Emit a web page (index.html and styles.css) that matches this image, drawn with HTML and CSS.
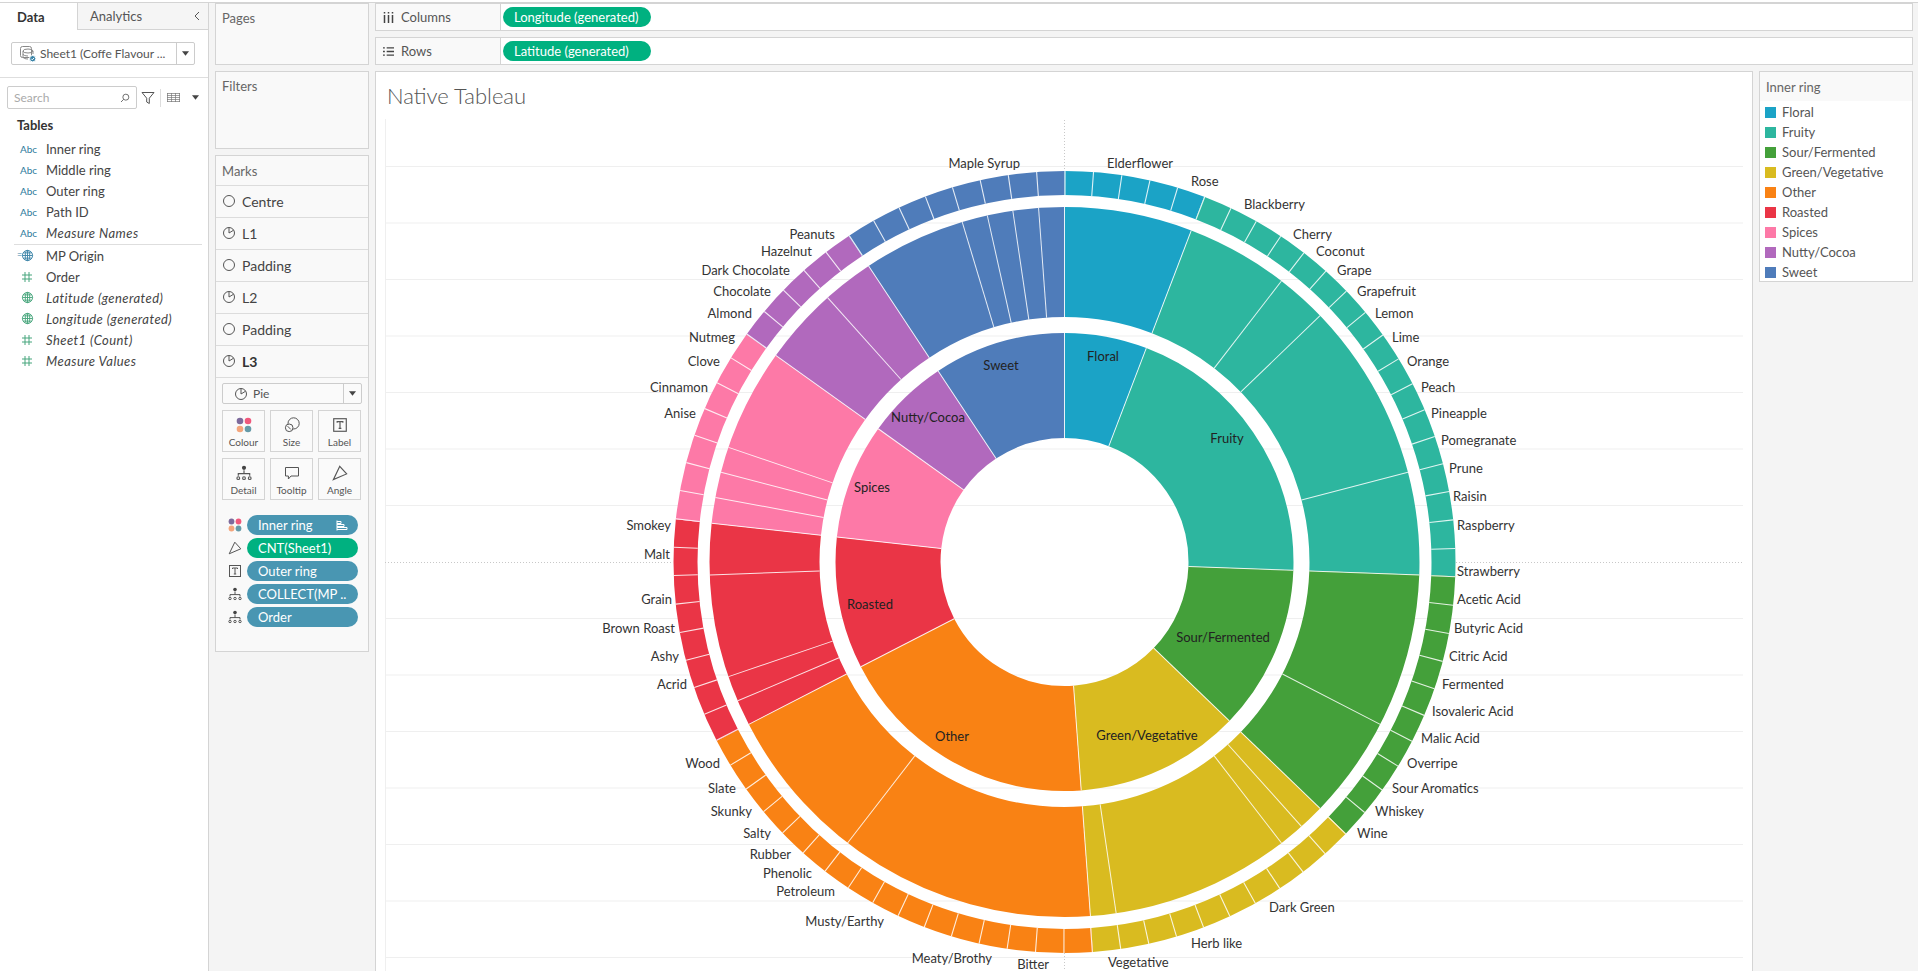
FILE: index.html
```html
<!DOCTYPE html>
<html lang="en">
<head>
<meta charset="utf-8">
<title>Native Tableau</title>
<link rel="stylesheet" href="styles.css">
</head>
<body>
<svg class="defs" width="0" height="0" aria-hidden="true">
  <defs>
    <symbol id="i-hash" viewBox="0 0 12 12"><path d="M4 1v10M8 1v10M1 4h10M1 8h10"/></symbol>
    <symbol id="i-globe" viewBox="0 0 14 14"><circle cx="7" cy="7" r="5.5"/><ellipse cx="7" cy="7" rx="2.4" ry="5.5"/><path d="M1.5 7h11M2.2 4.2h9.6M2.2 9.8h9.6M7 1.5v11"/></symbol>
    <symbol id="i-circle" viewBox="0 0 14 14"><circle cx="7" cy="7" r="5.5"/></symbol>
    <symbol id="i-pie" viewBox="0 0 14 14"><circle cx="7" cy="7" r="5.5"/><path d="M7 7V1.5M7 7l4.6-2.8"/></symbol>
    <symbol id="i-colour" viewBox="0 0 16 16"><circle class="d1" cx="4" cy="4" r="3.3"/><circle class="d2" cx="12" cy="4" r="3.3"/><circle class="d3" cx="4" cy="12" r="3.3"/><circle class="d4" cx="12" cy="12" r="3.3"/></symbol>
    <symbol id="i-size" viewBox="0 0 16 16"><circle cx="9.6" cy="6.4" r="5.6"/><circle class="fillw" cx="5.2" cy="10.8" r="3.8"/><path d="M3.6 9.2l3.2 3.2"/></symbol>
    <symbol id="i-label" viewBox="0 0 14 14"><rect x="1.5" y="1.5" width="11" height="11"/><path d="M4.5 5V4h5v1M7 4v6M5.800 10h2.400"/></symbol>
    <symbol id="i-detail" viewBox="0 0 14 14"><circle class="solid" cx="7" cy="2.5" r="1.8"/><path d="M7 4.500V8M2 9.500V7.600h10v1.900"/><circle cx="2" cy="11.5" r="1.2"/><circle cx="7" cy="11.5" r="1.2"/><circle cx="12" cy="11.5" r="1.2"/></symbol>
    <symbol id="i-tooltip" viewBox="0 0 16 14"><path d="M1.5 1.5h13v8.500H7l-2.600 3v-3H1.500z"/></symbol>
    <symbol id="i-angle" viewBox="0 0 14 14"><path d="M6.800 1.200l6 6.600L1.200 12.800z"/></symbol>
    <symbol id="i-caret" viewBox="0 0 8 5"><path class="solid" d="M0 0h8L4 5z"/></symbol>
  </defs>
</svg>

<div class="top-strip"></div>
<div class="app">
  <aside class="side">
    <div class="tabs">
      <div class="tab tab-on">Data</div>
      <div class="tab tab-off">Analytics<svg class="chev" viewBox="0 0 6 10"><path d="M5 1L1 5l4 4"/></svg></div>
    </div>
    <div class="source">
      <svg class="src-icon" viewBox="0 0 16 16">
        <rect class="g" x="0.5" y="0.5" width="11" height="11" rx="2"/>
        <ellipse class="g" cx="8" cy="5" rx="5" ry="2"/>
        <path class="g" d="M3 5v6c0 1.200 2.200 2 5 2M13 5v3M3 8c0 1 2 2 5 2"/>
        <circle class="badge" cx="12.7" cy="12.7" r="3.2"/>
        <path class="tick" d="M11.200 12.700l1.100 1.100 1.900-2"/>
      </svg>
      <span class="src-text">Sheet1 (Coffe Flavour ...</span>
      <span class="src-drop"><svg class="caret"><use href="#i-caret"/></svg></span>
    </div>
    <div class="search-row">
      <div class="search"><span class="ph">Search</span>
        <svg class="mag" viewBox="0 0 12 12"><circle cx="7" cy="5" r="3.6"/><path d="M4.400 7.600L1.200 10.800"/></svg>
      </div>
      <svg class="funnel" viewBox="0 0 14 14"><path d="M1 1.500h12L8.300 7.200v5.300L5.700 11V7.200z"/></svg>
      <span class="vsep"></span>
      <svg class="gridic" viewBox="0 0 13 10"><path d="M0 .5h13M0 2.500h13M0 4.500h13M0 6.500h13M0 8.500h13M.5 0v9M4.500 0v9M8.500 0v9M12.500 0v9"/></svg>
      <svg class="caret caret-far"><use href="#i-caret"/></svg>
    </div>
    <div class="tables">Tables</div>
    <ul class="fields">
      <li class="field"><span class="abc">Abc</span>Inner ring</li>
      <li class="field"><span class="abc">Abc</span>Middle ring</li>
      <li class="field"><span class="abc">Abc</span>Outer ring</li>
      <li class="field"><span class="abc">Abc</span>Path ID</li>
      <li class="field calc"><span class="abc">Abc</span>Measure Names</li>
    </ul>
    <div class="field-sep"></div>
    <ul class="fields fields-2">
      <li class="field"><span class="fi blue eq"><svg><use href="#i-globe"/></svg></span>MP Origin</li>
      <li class="field"><span class="fi green"><svg class="h"><use href="#i-hash"/></svg></span>Order</li>
      <li class="field calc"><span class="fi green"><svg><use href="#i-globe"/></svg></span>Latitude (generated)</li>
      <li class="field calc"><span class="fi green"><svg><use href="#i-globe"/></svg></span>Longitude (generated)</li>
      <li class="field calc"><span class="fi green"><svg class="h"><use href="#i-hash"/></svg></span>Sheet1 (Count)</li>
      <li class="field calc"><span class="fi green"><svg class="h"><use href="#i-hash"/></svg></span>Measure Values</li>
    </ul>
  </aside>

  <section class="cards">
    <div class="card card-pages"><div class="card-title">Pages</div></div>
    <div class="card card-filters"><div class="card-title">Filters</div></div>
    <div class="card card-marks">
      <div class="marks-title">Marks</div>
      <div class="mark-row"><svg class="mi"><use href="#i-circle"/></svg>Centre</div>
      <div class="mark-row"><svg class="mi"><use href="#i-pie"/></svg>L1</div>
      <div class="mark-row"><svg class="mi"><use href="#i-circle"/></svg>Padding</div>
      <div class="mark-row"><svg class="mi"><use href="#i-pie"/></svg>L2</div>
      <div class="mark-row"><svg class="mi"><use href="#i-circle"/></svg>Padding</div>
      <div class="mark-row mark-active"><svg class="mi"><use href="#i-pie"/></svg>L3</div>
      <div class="marks-body">
        <div class="type-select"><svg class="mi type-ic"><use href="#i-pie"/></svg><span class="type-name">Pie</span><span class="type-drop"><svg class="caret"><use href="#i-caret"/></svg></span></div>
        <div class="btns">
          <div class="btn"><svg class="bi"><use href="#i-colour"/></svg>Colour</div>
          <div class="btn"><svg class="bi"><use href="#i-size"/></svg>Size</div>
          <div class="btn"><svg class="bi"><use href="#i-label"/></svg>Label</div>
          <div class="btn"><svg class="bi"><use href="#i-detail"/></svg>Detail</div>
          <div class="btn"><svg class="bi"><use href="#i-tooltip"/></svg>Tooltip</div>
          <div class="btn"><svg class="bi"><use href="#i-angle"/></svg>Angle</div>
        </div>
        <div class="encs">
          <div class="enc"><svg class="ei"><use href="#i-colour"/></svg><span class="pill pill-blue pill-wide">Inner ring<svg class="sort" viewBox="0 0 12 11"><path d="M1 .5v10M1 1.500h4v2H1M1 4.500h7v2H1M1 7.500h10v2H1"/></svg></span></div>
          <div class="enc"><svg class="ei"><use href="#i-angle"/></svg><span class="pill pill-green pill-wide">CNT(Sheet1)</span></div>
          <div class="enc"><svg class="ei"><use href="#i-label"/></svg><span class="pill pill-blue pill-wide">Outer ring</span></div>
          <div class="enc"><svg class="ei"><use href="#i-detail"/></svg><span class="pill pill-blue pill-wide">COLLECT(MP ..</span></div>
          <div class="enc"><svg class="ei"><use href="#i-detail"/></svg><span class="pill pill-blue pill-wide">Order</span></div>
        </div>
      </div>
    </div>
  </section>

  <main class="main">
    <div class="shelf">
      <div class="shelf-label"><svg class="shelf-ic" viewBox="0 0 11 11"><path d="M1.500 3v8M5.500 3v8M9.500 3v8M1.500 0v1.500M5.500 0v1.500M9.500 0v1.500"/></svg>Columns</div>
      <div class="shelf-body"><span class="pill pill-green pill-shelf">Longitude (generated)</span></div>
    </div>
    <div class="shelf">
      <div class="shelf-label"><svg class="shelf-ic" viewBox="0 0 12 10"><path d="M0 1h2M4 1h8M0 5h2M4 5h8M0 9h2M4 9h8"/></svg>Rows</div>
      <div class="shelf-body"><span class="pill pill-green pill-shelf">Latitude (generated)</span></div>
    </div>
    <div class="work">
      <div class="view">
        <h1 class="view-title">Native Tableau</h1>
        <svg class="chart" viewBox="385 119 1358 852" role="img" aria-label="Sunburst of coffee flavours">
          <g class="grid">
            <path d="M385.500 119V971"/>
            <path d="M385 166.500H1743M385 223H1743M385 279.500H1743M385 336H1743M385 392.500H1743M385 449H1743M385 505.500H1743M385 618.500H1743M385 675H1743M385 731.500H1743M385 788H1743M385 844.500H1743M385 901H1743M385 957.500H1743"/>
          </g>
          <g class="zero">
            <path d="M385 562.500H673M1456 562.500H1743M1064.500 120V171M1064.500 953V971"/>
          </g>
          <g transform="translate(1064.500 562) rotate(-90)">
            <g class="ring ring-in">
              <circle class="c-floral" pathLength="86" stroke-dasharray="5 81"/>
              <circle class="c-fruity" pathLength="86" stroke-dasharray="17 69" stroke-dashoffset="-5"/>
              <circle class="c-sour" pathLength="86" stroke-dasharray="10 76" stroke-dashoffset="-22"/>
              <circle class="c-green" pathLength="86" stroke-dasharray="10 76" stroke-dashoffset="-32"/>
              <circle class="c-other" pathLength="86" stroke-dasharray="16 70" stroke-dashoffset="-42"/>
              <circle class="c-roast" pathLength="86" stroke-dasharray="8 78" stroke-dashoffset="-58"/>
              <circle class="c-spice" pathLength="86" stroke-dasharray="7 79" stroke-dashoffset="-66"/>
              <circle class="c-nutty" pathLength="86" stroke-dasharray="5 81" stroke-dashoffset="-73"/>
              <circle class="c-sweet" pathLength="86" stroke-dasharray="8 78" stroke-dashoffset="-78"/>
            </g>
            <g class="ring ring-mid">
              <circle class="c-floral" pathLength="86" stroke-dasharray="5 81"/>
              <circle class="c-fruity" pathLength="86" stroke-dasharray="17 69" stroke-dashoffset="-5"/>
              <circle class="c-sour" pathLength="86" stroke-dasharray="10 76" stroke-dashoffset="-22"/>
              <circle class="c-green" pathLength="86" stroke-dasharray="10 76" stroke-dashoffset="-32"/>
              <circle class="c-other" pathLength="86" stroke-dasharray="16 70" stroke-dashoffset="-42"/>
              <circle class="c-roast" pathLength="86" stroke-dasharray="8 78" stroke-dashoffset="-58"/>
              <circle class="c-spice" pathLength="86" stroke-dasharray="7 79" stroke-dashoffset="-66"/>
              <circle class="c-nutty" pathLength="86" stroke-dasharray="5 81" stroke-dashoffset="-73"/>
              <circle class="c-sweet" pathLength="86" stroke-dasharray="8 78" stroke-dashoffset="-78"/>
            </g>
            <g class="ring ring-out">
              <circle class="c-floral" pathLength="86" stroke-dasharray="5 81"/>
              <circle class="c-fruity" pathLength="86" stroke-dasharray="17 69" stroke-dashoffset="-5"/>
              <circle class="c-sour" pathLength="86" stroke-dasharray="10 76" stroke-dashoffset="-22"/>
              <circle class="c-green" pathLength="86" stroke-dasharray="10 76" stroke-dashoffset="-32"/>
              <circle class="c-other" pathLength="86" stroke-dasharray="16 70" stroke-dashoffset="-42"/>
              <circle class="c-roast" pathLength="86" stroke-dasharray="8 78" stroke-dashoffset="-58"/>
              <circle class="c-spice" pathLength="86" stroke-dasharray="7 79" stroke-dashoffset="-66"/>
              <circle class="c-nutty" pathLength="86" stroke-dasharray="5 81" stroke-dashoffset="-73"/>
              <circle class="c-sweet" pathLength="86" stroke-dasharray="8 78" stroke-dashoffset="-78"/>
              <circle class="ticks" pathLength="86" stroke-dasharray="0.04 0.96"/>
            </g>
          </g>
          <g class="seps" transform="translate(1064.500 562)">
            <g class="sep-in">
              <path d="M0-229V-124"/>
              <path transform="rotate(20.93)" d="M0-229V-124"/>
              <path transform="rotate(92.09)" d="M0-229V-124"/>
              <path transform="rotate(133.95)" d="M0-229V-124"/>
              <path transform="rotate(175.81)" d="M0-229V-124"/>
              <path transform="rotate(242.79)" d="M0-229V-124"/>
              <path transform="rotate(276.28)" d="M0-229V-124"/>
              <path transform="rotate(305.58)" d="M0-229V-124"/>
              <path transform="rotate(326.51)" d="M0-229V-124"/>
            </g>
            <g class="sep-mid">
              <path d="M0-355V-245"/>
              <path transform="rotate(20.93)" d="M0-355V-245"/>
              <path transform="rotate(37.67)" d="M0-355V-245"/>
              <path transform="rotate(46.05)" d="M0-355V-245"/>
              <path transform="rotate(75.35)" d="M0-355V-245"/>
              <path transform="rotate(92.09)" d="M0-355V-245"/>
              <path transform="rotate(117.21)" d="M0-355V-245"/>
              <path transform="rotate(133.95)" d="M0-355V-245"/>
              <path transform="rotate(138.14)" d="M0-355V-245"/>
              <path transform="rotate(142.33)" d="M0-355V-245"/>
              <path transform="rotate(171.63)" d="M0-355V-245"/>
              <path transform="rotate(175.81)" d="M0-355V-245"/>
              <path transform="rotate(217.67)" d="M0-355V-245"/>
              <path transform="rotate(242.79)" d="M0-355V-245"/>
              <path transform="rotate(246.98)" d="M0-355V-245"/>
              <path transform="rotate(251.16)" d="M0-355V-245"/>
              <path transform="rotate(267.91)" d="M0-355V-245"/>
              <path transform="rotate(276.28)" d="M0-355V-245"/>
              <path transform="rotate(280.47)" d="M0-355V-245"/>
              <path transform="rotate(284.65)" d="M0-355V-245"/>
              <path transform="rotate(288.84)" d="M0-355V-245"/>
              <path transform="rotate(305.58)" d="M0-355V-245"/>
              <path transform="rotate(318.14)" d="M0-355V-245"/>
              <path transform="rotate(326.51)" d="M0-355V-245"/>
              <path transform="rotate(343.26)" d="M0-355V-245"/>
              <path transform="rotate(347.44)" d="M0-355V-245"/>
              <path transform="rotate(351.63)" d="M0-355V-245"/>
              <path transform="rotate(355.81)" d="M0-355V-245"/>
            </g>
          </g>
          <g class="lab-in">
            <text x="1103" y="356">Floral</text>
            <text x="1227" y="438">Fruity</text>
            <text x="1223" y="637">Sour/Fermented</text>
            <text x="1147" y="735">Green/Vegetative</text>
            <text x="952" y="736">Other</text>
            <text x="870" y="604">Roasted</text>
            <text x="872" y="487">Spices</text>
            <text x="928" y="417">Nutty/Cocoa</text>
            <text x="1001" y="365">Sweet</text>
          </g>
          <g class="lab-r">
            <text x="1107" y="163">Elderflower</text>
            <text x="1191" y="181">Rose</text>
            <text x="1244" y="204">Blackberry</text>
            <text x="1293" y="234">Cherry</text>
            <text x="1316" y="251">Coconut</text>
            <text x="1337" y="270">Grape</text>
            <text x="1357" y="291">Grapefruit</text>
            <text x="1375" y="313">Lemon</text>
            <text x="1392" y="337">Lime</text>
            <text x="1407" y="361">Orange</text>
            <text x="1421" y="387">Peach</text>
            <text x="1431" y="413">Pineapple</text>
            <text x="1441" y="440">Pomegranate</text>
            <text x="1449" y="468">Prune</text>
            <text x="1453" y="496">Raisin</text>
            <text x="1457" y="525">Raspberry</text>
            <text x="1457" y="571">Strawberry</text>
            <text x="1457" y="599">Acetic Acid</text>
            <text x="1454" y="628">Butyric Acid</text>
            <text x="1449" y="656">Citric Acid</text>
            <text x="1442" y="684">Fermented</text>
            <text x="1432" y="711">Isovaleric Acid</text>
            <text x="1421" y="738">Malic Acid</text>
            <text x="1407" y="763">Overripe</text>
            <text x="1392" y="788">Sour Aromatics</text>
            <text x="1375" y="811">Whiskey</text>
            <text x="1357" y="833">Wine</text>
            <text x="1269" y="907">Dark Green</text>
            <text x="1191" y="943">Herb like</text>
            <text x="1108" y="962">Vegetative</text>
          </g>
          <g class="lab-l">
            <text x="1020" y="163">Maple Syrup</text>
            <text x="835" y="234">Peanuts</text>
            <text x="812" y="251">Hazelnut</text>
            <text x="790" y="270">Dark Chocolate</text>
            <text x="771" y="291">Chocolate</text>
            <text x="752" y="313">Almond</text>
            <text x="735" y="337">Nutmeg</text>
            <text x="720" y="361">Clove</text>
            <text x="708" y="387">Cinnamon</text>
            <text x="696" y="413">Anise</text>
            <text x="671" y="525">Smokey</text>
            <text x="670" y="554">Malt</text>
            <text x="672" y="599">Grain</text>
            <text x="675" y="628">Brown Roast</text>
            <text x="679" y="656">Ashy</text>
            <text x="687" y="684">Acrid</text>
            <text x="720" y="763">Wood</text>
            <text x="736" y="788">Slate</text>
            <text x="752" y="811">Skunky</text>
            <text x="771" y="833">Salty</text>
            <text x="791" y="854">Rubber</text>
            <text x="812" y="873">Phenolic</text>
            <text x="835" y="891">Petroleum</text>
            <text x="884" y="921">Musty/Earthy</text>
            <text x="992" y="958">Meaty/Brothy</text>
            <text x="1049" y="964">Bitter</text>
          </g>
        </svg>
      </div>
      <aside class="legend">
        <div class="legend-title">Inner ring</div>
        <ul class="legend-list">
          <li class="legend-item"><span class="sw s-floral"></span>Floral</li>
          <li class="legend-item"><span class="sw s-fruity"></span>Fruity</li>
          <li class="legend-item"><span class="sw s-sour"></span>Sour/Fermented</li>
          <li class="legend-item"><span class="sw s-green"></span>Green/Vegetative</li>
          <li class="legend-item"><span class="sw s-other"></span>Other</li>
          <li class="legend-item"><span class="sw s-roast"></span>Roasted</li>
          <li class="legend-item"><span class="sw s-spice"></span>Spices</li>
          <li class="legend-item"><span class="sw s-nutty"></span>Nutty/Cocoa</li>
          <li class="legend-item"><span class="sw s-sweet"></span>Sweet</li>
        </ul>
      </aside>
    </div>
  </main>
</div>
</body>
</html>
```
FILE: styles.css
```css
* { box-sizing: border-box; }
html, body { margin: 0; height: 971px; overflow: hidden; }
body { background: #f4f4f4; font-family: Lato, "Open Sans", sans-serif; font-size: 13px; color: #444; }
ul { list-style: none; margin: 0; padding: 0; }
svg { display: block; }
.defs { position: absolute; }

.top-strip { height: 3px; background: #fff; border-bottom: 1px solid #d4d4d4; }
.app { display: flex; height: 968px; }

/* icons */
.side svg, .cards svg, .shelf svg { fill: none; stroke: #555; stroke-width: 1; }
.solid { fill: #444; stroke: none; }
.fillw { fill: #fafafa; }

/* data pane */
.side { width: 209px; flex: none; background: #fff; border-right: 1px solid #d4d4d4; }
.tabs { display: flex; height: 27px; }
.tab { font-size: 13px; display: flex; align-items: center; }
.tab-on { width: 77px; padding-left: 17px; font-weight: 700; color: #333; }
.tab-off { flex: 1; padding-left: 12px; background: #f5f5f5; border-left: 1px solid #d4d4d4; border-bottom: 1px solid #d4d4d4; color: #555; justify-content: space-between; padding-right: 8px; }
.chev { width: 6px; height: 10px; }
.source { margin: 12px 13px 0 11px; height: 23px; border: 1px solid #ccc; border-radius: 2px; display: flex; align-items: center; padding-left: 8px; color: #555; }
.src-icon { width: 16px; height: 16px; flex: none; }
.side .src-icon .g { stroke: #888; }
.side .src-icon .badge { fill: #3b84a8; stroke: #fff; }
.side .src-icon .tick { stroke: #fff; }
.src-text { margin-left: 4px; flex: 1; font-size: 12px; white-space: nowrap; }
.src-drop { width: 18px; height: 21px; border-left: 1px solid #ccc; display: flex; align-items: center; justify-content: center; }
.caret { width: 7px; height: 5px; }
.search-row { margin-top: 12px; padding: 8px 0 0 7px; border-top: 1px solid #dedede; display: flex; align-items: center; box-sizing: content-box; height: 23px; }
.search { width: 130px; height: 23px; border: 1px solid #ccc; border-radius: 2px; display: flex; align-items: center; justify-content: space-between; padding: 0 6px; }
.ph { color: #aaa; font-size: 12px; }
.mag { width: 10px; height: 10px; }
.funnel { width: 14px; height: 14px; margin-left: 4px; }
.vsep { width: 1px; height: 18px; background: #ddd; margin-left: 5px; }
.side .gridic { width: 13px; height: 10px; margin-left: 6px; stroke: #777; stroke-width: .7; }
.caret-far { margin-left: 12px; }
.tables { margin: 7px 0 0 17px; font-weight: 700; font-size: 13px; color: #333; height: 18px; line-height: 18px; }
.fields { padding-top: 4px; }
.fields-2 { padding-top: 0; }
.field { height: 21px; display: flex; align-items: center; color: #444; font-size: 13px; }
.calc { font-style: italic; letter-spacing: .45px; }
.abc { width: 46px; padding-left: 20px; font-size: 10px; color: #2d7a9c; font-style: normal; letter-spacing: 0; flex: none; }
.field-sep { margin: 1px 6px 0 14px; height: 1px; background: #dedede; }
.fi { width: 46px; padding-left: 21px; flex: none; position: relative; }
.fi svg { width: 13px; height: 13px; }
.side .fi.green svg { stroke: #47a57c; }
.side .fi.blue svg { stroke: #3b84a8; }
.side .fi svg.h { width: 12px; height: 12px; }
.eq::before { content: "="; position: absolute; left: 17px; top: 0; font-size: 9px; color: #3b84a8; line-height: 12px; }

/* cards */
.cards { width: 154px; flex: none; margin-left: 6px; display: flex; flex-direction: column; gap: 6px; }
.card { background: #f9f9f9; border: 1px solid #d4d4d4; }
.card-title { padding: 6px 6px; color: #666; line-height: 16px; }
.card-pages { height: 62px; }
.card-filters { height: 78px; }
.card-marks { height: 497px; }
.marks-title { height: 29px; padding: 0 6px; display: flex; align-items: center; color: #666; }
.mark-row { height: 32px; border-top: 1px solid #dcdcdc; display: flex; align-items: center; padding: 0 0 1px 6px; font-size: 14px; color: #444; }
.mi { width: 14px; height: 14px; margin-right: 6px; }
.mark-active { font-weight: 700; color: #333; }
.marks-body { border-top: 1px solid #dcdcdc; padding: 5px 6px 0; }
.type-select { height: 21px; border: 1px solid #ccc; border-radius: 2px; display: flex; align-items: center; padding-left: 11px; background: #fafafa; font-size: 12px; }
.type-ic { margin-right: 5px; }
.type-name { flex: 1; color: #555; }
.type-drop { width: 18px; height: 19px; border-left: 1px solid #ccc; display: flex; align-items: center; justify-content: center; }
.btns { display: grid; grid-template-columns: repeat(3, 43px); gap: 6px 5px; margin-top: 6px; }
.btn { height: 42px; border: 1px solid #d4d4d4; font-size: 10px; color: #555; display: flex; flex-direction: column; align-items: center; justify-content: flex-end; padding-bottom: 3px; gap: 3px; background: #fafafa; }
.bi { width: 16px; height: 16px; }
.encs { margin-top: 15px; display: flex; flex-direction: column; gap: 3px; }
.enc { display: flex; align-items: center; height: 20px; gap: 5px; margin-left: 6px; }
.ei { width: 14px; height: 14px; flex: none; }

/* pills */
.pill { display: flex; align-items: center; height: 20px; border-radius: 10px; color: #fff; font-size: 13px; white-space: nowrap; padding-left: 11px; }
.pill-green { background: #00b180; }
.pill-blue { background: #4996b2; }
.pill-wide { width: 111px; justify-content: space-between; padding-right: 10px; }
.pill-shelf { width: 148px; }
.cards svg.sort { width: 12px; height: 11px; stroke: #fff; }
.d1 { fill: #7d6a9c; stroke: none; }
.d2 { fill: #f0587c; stroke: none; }
.d3 { fill: #f4a57c; stroke: none; }
.d4 { fill: #659aa8; stroke: none; }

/* shelves */
.main { flex: 1; min-width: 0; margin-left: 6px; margin-right: 5px; display: flex; flex-direction: column; gap: 6px; }
.shelf { height: 28px; flex: none; background: #f9f9f9; border: 1px solid #d4d4d4; display: flex; }
.shelf-label { width: 125px; border-right: 1px solid #d4d4d4; display: flex; align-items: center; padding-left: 7px; gap: 7px; color: #555; }
.shelf-ic { width: 11px; height: 11px; flex: none; }
.shelf-body { flex: 1; background: #fff; padding: 3px 2px; display: flex; }
.shelf svg.shelf-ic { stroke: #444; stroke-width: 1.500; }

/* view */
.work { display: flex; gap: 6px; flex: 1; min-height: 0; }
.view { flex: 1; min-width: 0; background: #fff; border: 1px solid #d4d4d4; border-bottom: none; padding: 0 9px; overflow: hidden; }
.view-title { margin: 0; height: 47px; display: flex; align-items: center; padding-left: 2px; font-size: 22px; font-weight: 300; color: #555; }
.chart { width: 1358px; height: 852px; font-size: 13px; }
.grid path { fill: none; stroke: #efefef; stroke-width: 1; }
.zero path { fill: none; stroke: #c8c8c8; stroke-width: 1; stroke-dasharray: 1 2; }
.ring circle { fill: none; cx: 0; cy: 0; }
.ring-in circle { r: 176.5px; stroke-width: 105px; }
.ring-mid circle { r: 300px; stroke-width: 110px; }
.ring-out circle { r: 379px; stroke-width: 24px; }
.ring-out circle.ticks { stroke: #fff; opacity: .85; }
.seps path { stroke: #fff; stroke-width: 1; opacity: .85; fill: none; }
.c-floral { stroke: #1ba3c6; }
.c-fruity { stroke: #2db69f; }
.c-sour { stroke: #44a03a; }
.c-green { stroke: #d9bb20; }
.c-other { stroke: #f98214; }
.c-roast { stroke: #ea3546; }
.c-spice { stroke: #fd79a7; }
.c-nutty { stroke: #b169bd; }
.c-sweet { stroke: #4f7cba; }
.chart text { dominant-baseline: central; }
.lab-in text { text-anchor: middle; fill: #222; }
.lab-r text { text-anchor: start; fill: #333; }
.lab-l text { text-anchor: end; fill: #333; }

/* legend */
.legend { width: 154px; flex: none; height: 211px; background: #fff; border: 1px solid #d4d4d4; align-self: flex-start; }
.legend-title { height: 29px; background: #f9f9f9; padding-left: 6px; display: flex; align-items: center; color: #666; }
.legend-list { padding-top: 1px; }
.legend-item { height: 20px; display: flex; align-items: center; padding-left: 5px; gap: 6px; color: #555; }
.sw { width: 11px; height: 11px; flex: none; }
.s-floral { background: #1ba3c6; }
.s-fruity { background: #2db69f; }
.s-sour { background: #44a03a; }
.s-green { background: #d9bb20; }
.s-other { background: #f98214; }
.s-roast { background: #ea3546; }
.s-spice { background: #fd79a7; }
.s-nutty { background: #b169bd; }
.s-sweet { background: #4f7cba; }
```
